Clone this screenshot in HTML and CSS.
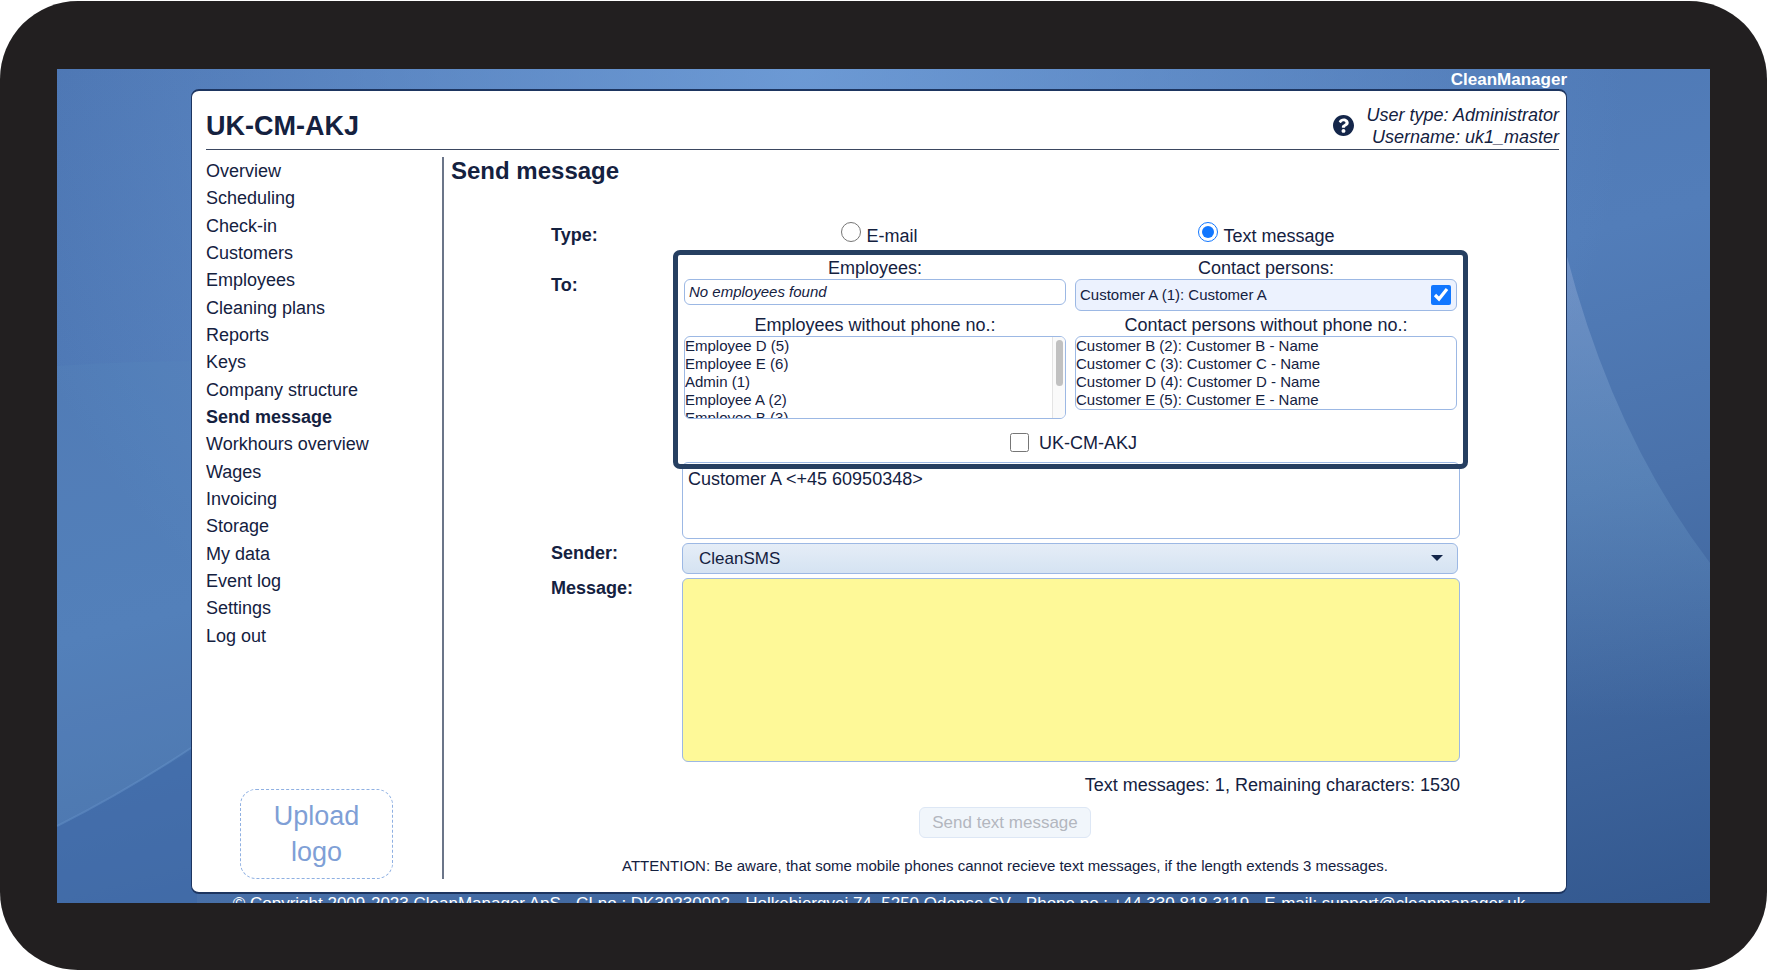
FILE: index.html
```html
<!DOCTYPE html>
<html lang="en">
<head>
    <meta charset="UTF-8">
    <meta name="viewport" content="width=device-width, initial-scale=1.0">
    <title>CleanManager - Send message</title>
    <link rel="stylesheet" href="styles.css">
</head>
<body>

<div class="device">
    <div class="screen">
        <!-- Desktop background -->
        <svg class="wallpaper" viewBox="0 0 1653 834" preserveAspectRatio="none" aria-hidden="true">
            <defs>
                <linearGradient id="shade" x1="0" y1="0" x2="0" y2="1">
                    <stop offset="0" stop-color="#a9b9e0" stop-opacity="0.35"/>
                    <stop offset="0.5" stop-color="#7fb0d8" stop-opacity="0.25"/>
                    <stop offset="1" stop-color="#7fb0d8" stop-opacity="0"/>
                </linearGradient>
            </defs>
            <path d="M0 297Q70 292 140 292V680L0 757Z" fill="#5c8cbf" fill-opacity="0.2"/>
            <path d="M0 757Q70 722 140 675V834H0Z" fill="#3a66a6" fill-opacity="0.5"/>
            <path d="M0 757Q70 722 140 675" fill="none" stroke="#6d9bd0" stroke-opacity="0.4" stroke-width="2"/>
            <path d="M1508 180Q1555 365 1653 494V650H1508Z" fill="url(#shade)"/>
        </svg>

        <div class="page">
            <div class="brand">CleanManager</div>

            <div class="panel">
                <header class="header">
                    <h1>UK-CM-AKJ</h1>
                    <a class="help" href="#" aria-label="Help">
                        <svg viewBox="8 8 496 496" width="21" height="21" aria-hidden="true">
                            <path fill="#14264a" d="M504 256c0 136.997-111.043 248-248 248S8 392.997 8 256C8 119.083 119.043 8 256 8s248 111.083 248 248zM262.655 90c-54.497 0-89.255 22.957-116.549 63.758-3.536 5.286-2.353 12.415 2.715 16.258l34.699 26.31c5.205 3.947 12.621 3.008 16.665-2.122 17.864-22.658 30.113-35.797 57.303-35.797 20.429 0 45.698 13.148 45.698 32.958 0 14.976-12.363 22.667-32.534 33.976C247.128 238.528 216 254.941 216 296v4c0 6.627 5.373 12 12 12h56c6.627 0 12-5.373 12-12v-1.333c0-28.462 83.186-29.647 83.186-106.667 0-58.002-60.165-102-116.531-102zM256 338c-25.365 0-46 20.635-46 46 0 25.364 20.635 46 46 46s46-20.636 46-46c0-25.365-20.635-46-46-46z"/>
                        </svg>
                    </a>
                    <div class="user">
                        User type: Administrator<br>
                        Username: uk1_master
                    </div>
                </header>

                <div class="columns">
                    <div class="sidebar">
                        <ul class="menu">
                            <li><a href="#">Overview</a></li>
                            <li><a href="#">Scheduling</a></li>
                            <li><a href="#">Check-in</a></li>
                            <li><a href="#">Customers</a></li>
                            <li><a href="#">Employees</a></li>
                            <li><a href="#">Cleaning plans</a></li>
                            <li><a href="#">Reports</a></li>
                            <li><a href="#">Keys</a></li>
                            <li><a href="#">Company structure</a></li>
                            <li><a href="#" class="active">Send message</a></li>
                            <li><a href="#">Workhours overview</a></li>
                            <li><a href="#">Wages</a></li>
                            <li><a href="#">Invoicing</a></li>
                            <li><a href="#">Storage</a></li>
                            <li><a href="#">My data</a></li>
                            <li><a href="#">Event log</a></li>
                            <li><a href="#">Settings</a></li>
                            <li><a href="#">Log out</a></li>
                        </ul>
                        <button type="button" class="upload">Upload<br>logo</button>
                    </div>

                    <main class="main">
                        <h2>Send message</h2>

                        <form class="message-form" id="message-form">
                            <div class="label type-label">Type:</div>
                            <div class="types">
                                <label><input type="radio" name="type" value="email"> E-mail</label>
                                <label><input type="radio" name="type" value="sms" checked> Text message</label>
                            </div>

                            <label class="label to-label" for="recipients">To:</label>
                            <div class="to">
                                <div class="picker">
                                    <div class="group">
                                        <h3>Employees:</h3>
                                        <div class="box empty">No employees found</div>
                                    </div>
                                    <div class="group">
                                        <h3>Contact persons:</h3>
                                        <label class="box contact">Customer A (1): Customer A <input type="checkbox" checked></label>
                                    </div>
                                    <div class="group">
                                        <h3>Employees without phone no.:</h3>
                                        <div class="box list scroll">
                                            <ul>
                                                <li>Employee D (5)</li>
                                                <li>Employee E (6)</li>
                                                <li>Admin (1)</li>
                                                <li>Employee A (2)</li>
                                                <li>Employee B (3)</li>
                                            </ul>
                                            <div class="track"><div class="thumb"></div></div>
                                        </div>
                                    </div>
                                    <div class="group">
                                        <h3>Contact persons without phone no.:</h3>
                                        <div class="box list">
                                            <ul>
                                                <li>Customer B (2): Customer B - Name</li>
                                                <li>Customer C (3): Customer C - Name</li>
                                                <li>Customer D (4): Customer D - Name</li>
                                                <li>Customer E (5): Customer E - Name</li>
                                            </ul>
                                        </div>
                                    </div>
                                    <label class="company"><input type="checkbox"> UK-CM-AKJ</label>
                                </div>
                                <textarea id="recipients" class="recipients">Customer A &lt;+45 60950348&gt;</textarea>
                            </div>

                            <label class="label" for="sender">Sender:</label>
                            <div class="sender">
                                <select id="sender">
                                    <option>CleanSMS</option>
                                </select>
                            </div>

                            <label class="label" for="message">Message:</label>
                            <textarea id="message" class="message"></textarea>
                        </form>

                        <p class="counter">Text messages: 1, Remaining characters: 1530</p>
                        <button type="submit" form="message-form" class="send" disabled>Send text message</button>
                        <p class="attention">ATTENTION: Be aware, that some mobile phones cannot recieve text messages, if the length extends 3 messages.</p>
                    </main>
                </div>
            </div>

            <footer class="footer">© Copyright 2009-2023 CleanManager ApS - CI.no.: DK39230992 - Holkebjergvej 74, 5250 Odense SV - Phone no.: +44 330 818 3119 - E-mail: support@cleanmanager.uk</footer>
        </div>
    </div>
</div>

</body>
</html>
```
FILE: styles.css
```css
* {
    box-sizing: border-box;
}
body {
    margin: 0;
    padding: 1px 0;
    background: #fff;
    color: #14213f;
    font-family: "Liberation Sans", Arial, sans-serif;
    font-size: 18px;
    line-height: 21px;
}
h1, h2, h3, p, ul {
    margin: 0;
    padding: 0;
}
ul {
    list-style: none;
}
a {
    color: inherit;
    text-decoration: none;
}
input, select, textarea, button {
    font-family: inherit;
    color: inherit;
    margin: 0;
}

/* Tablet frame */
.device {
    height: calc(100vh - 2px);
    padding: 68px 57px 67px;
    background: #221f20;
    border-radius: 78px;
}
.screen {
    position: relative;
    height: 100%;
    overflow: hidden;
    background:
        radial-gradient(ellipse 50% 90% at 45% 0, rgba(121, 168, 226, 0.7), rgba(121, 168, 226, 0)),
        linear-gradient(165deg, #4b74b1 0%, #527db9 45%, #4a72ab 65%, #33588f 100%);
}
.wallpaper {
    position: absolute;
    inset: 0;
    width: 100%;
    height: 100%;
}
.page {
    position: relative;
    padding: 0 143px 0 134px;
}
.brand {
    height: 20px;
    color: #fff;
    font-size: 17px;
    font-weight: bold;
    text-align: right;
}
.panel {
    padding: 0 7px 13px 14px;
    background: #fff;
    border: solid #1d3560;
    border-width: 2px 1px;
    border-radius: 8px;
}

/* Header */
.header {
    display: flex;
    align-items: center;
    height: 59px;
    padding-top: 12px;
    border-bottom: 1px solid #3b4861;
}
.header h1 {
    flex: 1;
    font-size: 27px;
}
.help {
    display: flex;
    margin: 0 13px 2px 0;
}
.user {
    font-style: italic;
    line-height: 22px;
    text-align: right;
}

/* Menu */
.columns {
    display: flex;
    padding-top: 7px;
}
.sidebar {
    display: flex;
    flex-direction: column;
    width: 238px;
    border-right: 2px solid #6b7589;
}
.menu {
    flex: 1;
    display: grid;
    grid-auto-rows: 1fr;
    align-items: center;
    padding-top: 1px;
}
.menu .active {
    font-weight: bold;
}
.upload {
    width: 153px;
    height: 90px;
    margin: 139px 0 0 34px;
    background: none;
    border: 1px dashed #8fb0e2;
    border-radius: 16px;
    color: #7f9fd6;
    font-size: 27px;
    line-height: 36px;
}

/* Message form */
.main {
    flex: 1;
    padding: 0 0 3px 7px;
}
.main h2 {
    font-size: 24px;
    line-height: 28px;
}
.message-form {
    display: grid;
    grid-template-columns: 131px 1fr;
    row-gap: 4px;
    margin: 37px 99px 0 100px;
}
.label {
    font-weight: bold;
}
.type-label {
    padding-top: 3px;
}
.to-label {
    padding-top: 25px;
}
.types {
    display: grid;
    grid-template-columns: 1fr 1fr;
    justify-items: center;
    height: 24px;
    margin-bottom: -1px;
    padding-left: 4px;
}
.types label {
    display: flex;
    align-items: flex-end;
    gap: 5px;
}
.types input {
    width: 20px;
    height: 20px;
    margin-bottom: 5px;
    accent-color: #1177ff;
}
.picker {
    position: relative;
    z-index: 1;
    display: grid;
    grid-template-columns: 1fr 1fr;
    align-content: start;
    gap: 4px 9px;
    height: 219px;
    margin: 0 -8px -7px -9px;
    padding: 3px 6px 0;
    border: 5px solid #263f61;
    border-radius: 7px;
}
.group h3 {
    font-size: 18px;
    font-weight: normal;
    text-align: center;
}
.box {
    border: 1px solid #9cb8e4;
    border-radius: 6px;
    font-size: 15px;
    line-height: 18px;
}
.empty {
    padding: 3px 4px;
    font-style: italic;
}
.contact {
    display: flex;
    align-items: center;
    justify-content: space-between;
    padding: 5px 5px 5px 4px;
    background: #ecf2fe;
}
.contact input {
    width: 20px;
    height: 20px;
    accent-color: #1177ff;
}
.list {
    display: flex;
    justify-content: space-between;
    max-height: 83px;
    overflow: hidden;
}
.track {
    width: 13px;
    padding: 3px 2px;
    background: #fafafa;
    border-left: 1px solid #e4e4e4;
}
.thumb {
    width: 7px;
    height: 46px;
    margin: 0 auto;
    background: #c1c1c1;
    border-radius: 4px;
}
.company {
    grid-column: 1 / -1;
    display: flex;
    justify-content: center;
    gap: 10px;
    padding: 10px 0 0 6px;
}
.company input {
    width: 19px;
    height: 19px;
}
textarea {
    display: block;
    width: 100%;
    padding: 6px 5px;
    border: 1px solid #9cb8e4;
    border-radius: 6px;
    font-size: 18px;
    line-height: 21px;
    resize: none;
}
.recipients {
    height: 77px;
}
.message {
    height: 184px;
    background: #fef998;
}
.sender {
    position: relative;
    padding-right: 2px;
}
.sender select {
    appearance: none;
    display: block;
    width: 100%;
    height: 31px;
    padding: 0 16px 1px;
    background: linear-gradient(#e5edf7, #d5e3f2);
    border: 1px solid #9cb8e4;
    border-radius: 6px;
    font-size: 17px;
}
.sender::after {
    content: "";
    position: absolute;
    top: 12px;
    right: 17px;
    border: 6px solid transparent;
    border-top-color: #14264a;
    border-bottom: 0;
}
.counter {
    margin: 13px 99px 0;
    text-align: right;
}
.send {
    display: block;
    height: 31px;
    margin: 11px auto 0;
    padding: 0 12px;
    background: #f1f6fb;
    border: 1px solid #dde7f5;
    border-radius: 6px;
    color: #b3b7bf;
    font-size: 17px;
}
.attention {
    margin-top: 17px;
    font-size: 15px;
    text-align: center;
}
.footer {
    color: #fff;
    font-size: 17px;
    line-height: 19px;
    text-align: center;
    white-space: nowrap;
}
```
